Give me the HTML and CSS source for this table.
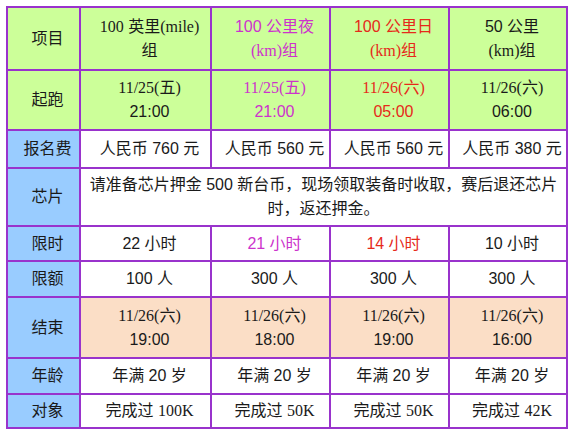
FILE: index.html
```html
<!DOCTYPE html>
<html lang="zh">
<head>
<meta charset="utf-8">
<title>赛事组别</title>
<link rel="stylesheet" href="styles.css">
</head>
<body>
<table class="race">
  <colgroup>
    <col class="c1"><col class="c2"><col class="c3"><col class="c4"><col class="c5">
  </colgroup>
  <tr class="r-head green">
    <td class="lab">项目</td>
    <td><span class="s">100</span> 英里<span class="s">(mile)</span><br>组</td>
    <td class="pink">100 公里夜<br><span class="s">(km)</span>组</td>
    <td class="red">100 公里日<br><span class="s">(km)</span>组</td>
    <td>50 公里<br><span class="s">(km)</span>组</td>
  </tr>
  <tr class="r-start green">
    <td class="lab">起跑</td>
    <td><span class="s">11/25(</span>五<span class="s">)</span><br>21:00</td>
    <td class="pink"><span class="s">11/25(</span>五<span class="s">)</span><br>21:00</td>
    <td class="red"><span class="s">11/26(</span>六<span class="s">)</span><br>05:00</td>
    <td><span class="s">11/26(</span>六<span class="s">)</span><br>06:00</td>
  </tr>
  <tr class="r-fee">
    <td class="lab blue">报名费</td>
    <td>人民币 760 元</td>
    <td>人民币 560 元</td>
    <td>人民币 560 元</td>
    <td>人民币 380 元</td>
  </tr>
  <tr class="r-chip">
    <td class="lab blue">芯片</td>
    <td colspan="4" class="wide">请准备芯片押金 500 新台币，现场领取装备时收取，赛后退还芯片<br>时，返还押金。</td>
  </tr>
  <tr class="r-limit">
    <td class="lab blue">限时</td>
    <td>22 小时</td>
    <td class="pink">21 小时</td>
    <td class="red">14 小时</td>
    <td>10 小时</td>
  </tr>
  <tr class="r-quota">
    <td class="lab blue">限额</td>
    <td>100 人</td>
    <td>300 人</td>
    <td>300 人</td>
    <td>300 人</td>
  </tr>
  <tr class="r-end peach">
    <td class="lab blue">结束</td>
    <td><span class="s">11/26(</span>六<span class="s">)</span><br>19:00</td>
    <td><span class="s">11/26(</span>六<span class="s">)</span><br>18:00</td>
    <td><span class="s">11/26(</span>六<span class="s">)</span><br>19:00</td>
    <td><span class="s">11/26(</span>六<span class="s">)</span><br>16:00</td>
  </tr>
  <tr class="r-age">
    <td class="lab blue">年龄</td>
    <td>年满 20 岁</td>
    <td>年满 20 岁</td>
    <td>年满 20 岁</td>
    <td>年满 20 岁</td>
  </tr>
  <tr class="r-who">
    <td class="lab blue">对象</td>
    <td>完成过 <span class="s">100K</span></td>
    <td>完成过 <span class="s">50K</span></td>
    <td>完成过 <span class="s">50K</span></td>
    <td>完成过 <span class="s">42K</span></td>
  </tr>
</table>
</body>
</html>
```

FILE: styles.css
```css
html, body {
  background: #ffffff;
}
body {
  margin: 6px 0 0 6px;
  font-family: "Liberation Sans", "Noto Sans CJK SC", sans-serif;
  font-size: 16px;
  line-height: 24px;
  color: #1a1a1a;
}
.race {
  table-layout: fixed;
  width: 562px;
  border-collapse: separate;
  border-spacing: 0;
  border-left: 2px solid #9933cc;
  border-top: 2px solid #9933cc;
  background: #ffffff;
}
.c1 { width: 73px; }
.c2 { width: 131px; }
.c3 { width: 119px; }
.c4 { width: 119px; }
.c5 { width: 118px; }
.race td {
  border-right: 2px solid #9933cc;
  border-bottom: 2px solid #9933cc;
  padding: 0 0 0 8px;
  text-align: center;
  vertical-align: middle;
  white-space: nowrap;
}
.race td.wide {
  padding: 0 0 0 0;
}
.s {
  font-family: "Liberation Serif", "Noto Sans CJK SC", serif;
}
.green td { background: #ccff99; }
.peach td { background: #fbdec6; }
.race td.blue { background: #99ccff; }
.pink { color: #cc33cc; }
.red { color: #e62a1a; }
.r-head { height: 63px; }
.r-start { height: 60px; }
.r-fee { height: 38px; }
.r-chip { height: 58px; }
.r-limit { height: 35px; }
.r-quota { height: 36px; }
.r-end { height: 61px; }
.r-age { height: 36px; }
.r-who { height: 34px; }
```
